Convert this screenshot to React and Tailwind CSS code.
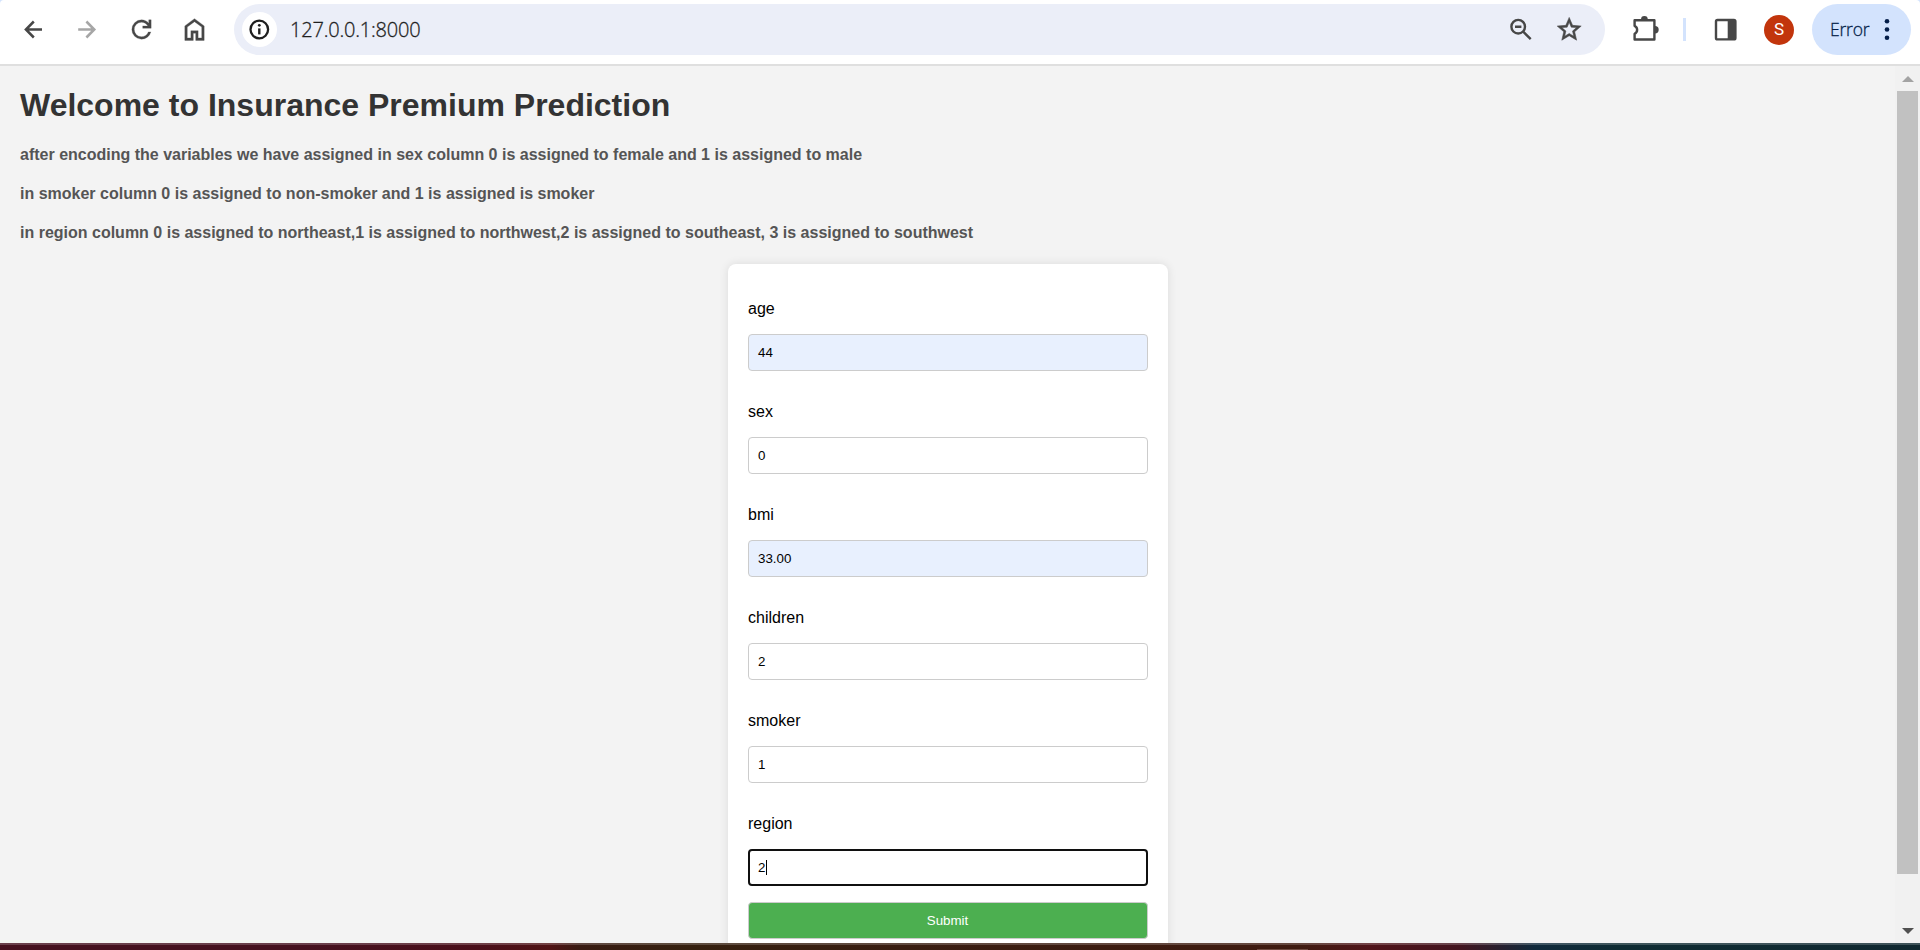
import React from "react";

function Icon({ children, className = "" }) {
  return (
    <svg viewBox="0 0 31 31" fill="none" className={"h-[31px] w-[31px] shrink-0 " + className}>
      {children}
    </svg>
  );
}

function Toolbar() {
  return (
    <div className="h-[66px] shrink-0 bg-[#d3e3fd]">
      <header className="flex h-[66px] items-start rounded-t border-b-2 border-[#dfdfdf] bg-white pt-1 text-[#474747]">
        <div className="flex h-[51px] w-full items-center">
          <Icon className="ml-[18px]">
            <path d="M15.8 7.5 7.9 15.5l7.9 8M8 15.5h16" stroke="currentColor" strokeWidth="2.5" />
          </Icon>
          <Icon className="ml-[22px] text-[#a6a6a6]">
            <path d="m15.4 7.5 7.9 8-7.9 8M23.2 15.5h-16" stroke="currentColor" strokeWidth="2.5" />
          </Icon>
          <svg viewBox="0 -960 960 960" fill="currentColor" stroke="currentColor" strokeWidth="8" className="ml-[25px] h-[29px] w-[29px] shrink-0">
            <path d="M480-160q-134 0-227-93t-93-227q0-134 93-227t227-93q69 0 132 28.5T720-690v-110h80v280H520v-80h168q-32-56-87.5-88T480-720q-100 0-170 70t-70 170q0 100 70 170t170 70q77 0 139-44t87-116h84q-28 106-114 173t-196 67Z" />
          </svg>
          <svg viewBox="0 -960 960 960" fill="currentColor" className="ml-[24px] h-[29px] w-[29px] shrink-0">
            <path d="M240-200h120v-240h240v240h120v-360L480-740 240-560v360Zm-80 80v-480l320-240 320 240v480H520v-240h-80v240H160Z" stroke="currentColor" strokeWidth="10" />
          </svg>

          <div className="ml-[25px] flex h-[51px] w-[1371px] shrink-0 items-center rounded-full bg-[#ebeef8]">
            <div className="ml-2 flex h-[35px] w-[35px] items-center justify-center rounded-full bg-white text-[#1f1f1f]">
              <Icon>
                <circle cx="15.3" cy="15.5" r="8.8" stroke="currentColor" strokeWidth="2.3" />
                <path d="M15.3 14.4v6" stroke="currentColor" strokeWidth="2.4" />
                <circle cx="15.3" cy="11.3" r="1.4" fill="currentColor" />
              </Icon>
            </div>
            <span className="ml-[13px] grow font-['Open_Sans',sans-serif] text-[20px] font-[340] tracking-[-0.2px] text-[#1f1f1f] [-webkit-text-stroke:0.3px_#1f1f1f]">
              127.0.0.1:8000
            </span>
            <Icon>
              <circle cx="14.2" cy="12.7" r="6.8" stroke="currentColor" strokeWidth="2.4" />
              <path d="m19 17.5 7.7 7.7M11 12.7h6.4" stroke="currentColor" strokeWidth="2.4" />
            </Icon>
            <Icon className="ml-[18px] mr-[21px]">
              <path
                transform="translate(1.8 1) scale(1.2)"
                d="M22 9.24l-7.19-.62L12 2 9.19 8.63 2 9.24l5.46 4.73L5.82 21 12 17.27 18.18 21l-1.63-7.03L22 9.24zM12 15.4l-3.76 2.27 1-4.28-3.32-2.88 4.38-.38L12 6.1l1.71 4.04 4.38.38-3.32 2.88 1 4.28L12 15.4z"
                fill="currentColor"
                stroke="currentColor"
                strokeWidth="0.45"
              />
            </Icon>
          </div>

          <Icon className="ml-[25px]">
            <path d="M4.6 6.2h19.8v19.3H4.6v-5.6a4.5 4.5 0 0 0 0-8.1z" stroke="currentColor" strokeWidth="2.4" strokeLinejoin="round" />
            <path d="M11 5.4a3.4 3.4 0 0 1 6.8 0zM25 12.1a3.6 3.6 0 0 1 0 7.4z" fill="currentColor" />
          </Icon>
          <div className="ml-[22px] h-[23px] w-[3px] shrink-0 bg-[#d3e3fd]" />
          <Icon className="ml-[24px]">
            <rect x="6" y="6" width="19.4" height="19.4" rx="1.5" stroke="currentColor" strokeWidth="2.4" />
            <path d="M17.7 6h7.5v19.4h-7.5z" fill="currentColor" />
          </Icon>
          <div className="ml-[23px] flex h-[30px] w-[30px] shrink-0 items-center justify-center rounded-full bg-[#c2350c] font-[Roboto,sans-serif] text-[17px] leading-none text-white">
            S
          </div>
          <div className="ml-[18px] flex h-[51px] w-[99px] shrink-0 items-center rounded-full bg-[#d3e3fd] text-[#041e49]">
            <span className="ml-[18px] w-[42px] font-['Open_Sans',sans-serif] text-[17.5px] font-[340] tracking-[-0.2px] [-webkit-text-stroke:0.3px_#041e49]">
              Error
            </span>
            <Icon>
              <circle cx="15" cy="7.2" r="2.3" fill="currentColor" />
              <circle cx="15" cy="15.5" r="2.3" fill="currentColor" />
              <circle cx="15" cy="23.8" r="2.3" fill="currentColor" />
            </Icon>
          </div>
        </div>
      </header>
    </div>
  );
}

function Scrollbar() {
  return (
    <div className="flex w-[25px] shrink-0 flex-col items-center bg-[#f1f1f1] pt-[10px]">
      <svg viewBox="0 0 12 6" className="h-[6px] w-[12px]" fill="#a3a3a3">
        <path d="M6 0l6 6H0z" />
      </svg>
      <div className="mt-[9px] h-[783px] w-[21px] bg-[#c1c1c1]" />
      <svg viewBox="0 0 12 6" className="mt-[54px] h-[6px] w-[12px]" fill="#505050">
        <path d="M0 0h12L6 6z" />
      </svg>
    </div>
  );
}

const fields = [
  { label: "age", value: "44", autofilled: true },
  { label: "sex", value: "0" },
  { label: "bmi", value: "33.00", autofilled: true },
  { label: "children", value: "2" },
  { label: "smoker", value: "1" },
  { label: "region", value: "2", focused: true },
];

function Field({ label, value, autofilled, focused }) {
  const look = focused
    ? "border-2 border-[#101010] bg-white pl-2"
    : autofilled
      ? "border border-[#ccc] bg-[#e8f0fe] pl-[9px]"
      : "border border-[#ccc] bg-white pl-[9px]";
  return (
    <div className="flex flex-col gap-4">
      <label className="h-[18px] text-[16px] leading-[18px]">{label}</label>
      <div className={"flex h-[37px] items-center rounded text-[13.333px] " + look}>
        <span>{value}</span>
        {focused && <span className="ml-px h-[15px] w-px bg-black" />}
      </div>
    </div>
  );
}

export default function App() {
  return (
    <div className="flex h-[950px] w-[1920px] flex-col overflow-hidden bg-[#f3f3f3] font-['Liberation_Sans',Arial,sans-serif] text-black">
      <Toolbar />
      <div className="flex h-[877px] shrink-0 overflow-hidden">
        <main className="flex grow flex-col px-5 pt-[21px]">
          <h1 className="h-[37px] text-[32px] leading-[37px] font-bold text-[#333]">Welcome to Insurance Premium Prediction</h1>
          <div className="mt-[22px] flex flex-col gap-[21px] text-[16px] leading-[18px] font-bold text-[#555]">
            <h4>after encoding the variables we have assigned in sex column 0 is assigned to female and 1 is assigned to male</h4>
            <h4>in smoker column 0 is assigned to non-smoker and 1 is assigned is smoker</h4>
            <h4>in region column 0 is assigned to northeast,1 is assigned to northwest,2 is assigned to southeast, 3 is assigned to southwest</h4>
          </div>
          <form className="mt-[22px] ml-[708px] h-[720px] w-[440px] shrink-0 rounded-lg bg-white px-5 pt-9 shadow-[0_0_10px_rgba(0,0,0,0.1)]">
            <div className="flex flex-col gap-8">
              {fields.map((f) => (
                <Field key={f.label} {...f} />
              ))}
            </div>
            <button
              type="button"
              className="mt-4 block h-[37px] w-full rounded border border-[#ccc] bg-[#4caf50] pr-px text-[13.333px] text-white"
            >
              Submit
            </button>
          </form>
        </main>
        <Scrollbar />
      </div>
      <footer className="flex h-[7px] shrink-0 justify-start border-t-2 border-white/20 bg-[linear-gradient(90deg,#45101f_0px,#45101f_300px,#4a0f1a_480px,#501315_550px,#381b12_580px,#35200f_690px,#3a1e12_900px,#3d1b10_1200px,#3f1b10_1300px,#50141a_1370px,#42141f_1460px,#102a3c_1535px,#0f2c33_1620px,#102830_1920px)] bg-origin-border">
        <div className="mt-1 ml-[1257px] h-px w-[51px] bg-[#6e4a40]" />
      </footer>
    </div>
  );
}
